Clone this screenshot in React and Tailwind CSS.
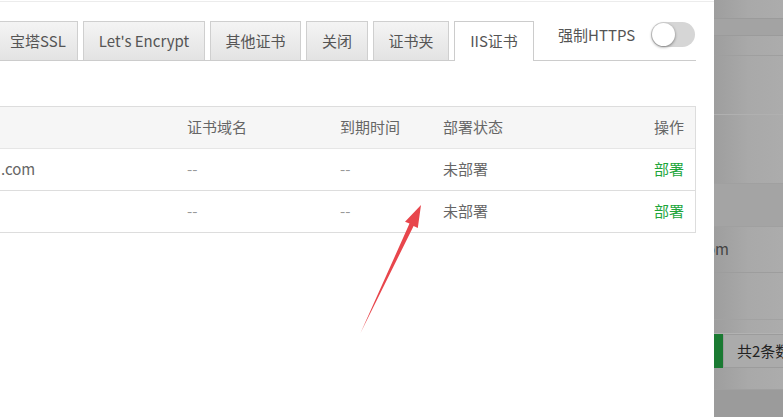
import React from "react";

const font = { fontFamily: '"Noto Sans CJK SC", "Noto Sans", sans-serif' };

const tabs = [
  { label: "宝塔SSL", w: "w-[80px]" },
  { label: "Let's Encrypt", w: "w-[122px]" },
  { label: "其他证书", w: "w-[91px]" },
  { label: "关闭", w: "w-[62px]" },
  { label: "证书夹", w: "w-[76px]" },
];

const rows = [
  { name: ".com", domain: "--", expire: "--", status: "未部署" },
  { name: "", domain: "--", expire: "--", status: "未部署" },
];

const Tabs = () => (
  <div className="relative flex h-[40px] w-[698px] items-end border-b border-[#cccccc] -ml-[2px]">
    {tabs.map((t) => (
      <div
        key={t.label}
        className={`${t.w} mr-[5px] flex h-[39px] shrink-0 items-center justify-center border border-b-0 border-[#cfcfcf] bg-gradient-to-b from-[#f4f4f4] to-[#e3e3e3] text-[15px] text-[#555]`}
      >
        {t.label}
      </div>
    ))}
    <div className="relative -mb-px flex h-[40px] w-[80px] shrink-0 items-center justify-center border border-b-0 border-[#cccccc] bg-white text-[15px] text-[#555]">
      IIS证书
    </div>
    <div className="ml-[24px] flex h-[40px] items-start whitespace-nowrap pt-[4px]">
      <span className="text-[15px] text-[#555]">强制HTTPS</span>
      <div className="ml-[16px] mt-[-2px] flex h-[25px] w-[44px] items-center rounded-full bg-[#d6d6d6] px-[1px]">
        <div className="h-[23px] w-[23px] rounded-full bg-white shadow-[0_1px_3px_rgba(0,0,0,0.45)]" />
      </div>
    </div>
  </div>
);

const Table = () => (
  <div className="mt-[45px] w-[696px] border-t border-r border-[#dddddd] text-[15px]">
    <div className="grid h-[42px] grid-cols-[187px_153px_103px_1fr] items-center border-b border-[#e6e6e6] bg-[#f6f6f6] text-[#666]">
      <span />
      <span>证书域名</span>
      <span>到期时间</span>
      <div className="flex justify-between pr-[11px]">
        <span>部署状态</span>
        <span>操作</span>
      </div>
    </div>
    {rows.map((r, i) => (
      <div
        key={i}
        className="grid h-[42px] grid-cols-[187px_153px_103px_1fr] items-center border-b border-[#dddddd] text-[#666]"
      >
        <span className="pl-[1px]">{r.name}</span>
        <span className="text-[#999]">{r.domain}</span>
        <span className="text-[#999]">{r.expire}</span>
        <div className="flex justify-between pr-[11px]">
          <span>{r.status}</span>
          <span className="text-[#20a53a]">部署</span>
        </div>
      </div>
    ))}
  </div>
);

const Backdrop = () => (
  <div className="flex h-full min-w-0 flex-1 flex-col overflow-hidden bg-gradient-to-r from-[#9e9e9e] via-[#a9a9a9] to-[#acacac] text-[15px]">
    <div className="h-[18px]" />
    <div className="h-[18px] border-y border-[#9b9b9b] bg-[#a3a3a3]" />
    <div className="h-[20px] border-b border-[#9f9f9f]" />
    <div className="h-[59px] border-b border-[#b0b0b0]" />
    <div className="h-[68px]" />
    <div className="h-[44px] border-y border-[#a0a0a0] bg-[#a4a4a4]" />
    <div className="flex h-[46px] items-center whitespace-nowrap border-b border-[#9d9d9d] text-[#444]">
      <span className="-ml-[8px]">om</span>
    </div>
    <div className="h-[47px] border-b border-[#a2a2a2]" />
    <div className="h-[14px] border-b border-[#b2b2b2]" />
    <div className="flex h-[34px] items-stretch">
      <div className="w-[9px] shrink-0 bg-[#1a7a32]" />
      <div className="flex flex-1 items-center whitespace-nowrap border border-[#9c9c9c] bg-[#ababab] pl-[13px] text-[#222]">
        共2条数据
      </div>
    </div>
    <div className="h-[22px] border-b border-[#a0a0a0]" />
    <div className="flex-1 bg-[#9b9b9b]" />
  </div>
);

const Arrow = () => (
  <svg className="pointer-events-none absolute left-0 top-0" width="783" height="417">
    <polygon
      points="421,205 417.8,228 413.6,226 360.5,333 409.5,223.6 405,221.8"
      fill="#e8464c"
    />
  </svg>
);

export default function App() {
  return (
    <div className="relative flex h-[417px] w-[783px] overflow-hidden bg-white" style={font}>
      <div className="relative h-full w-[714px] shrink-0 overflow-hidden bg-white">
        <div className="h-[2px] border-b border-[#ececec]" />
        <div className="pt-[19px]">
          <Tabs />
          <Table />
        </div>
      </div>
      <Backdrop />
      <Arrow />
    </div>
  );
}
